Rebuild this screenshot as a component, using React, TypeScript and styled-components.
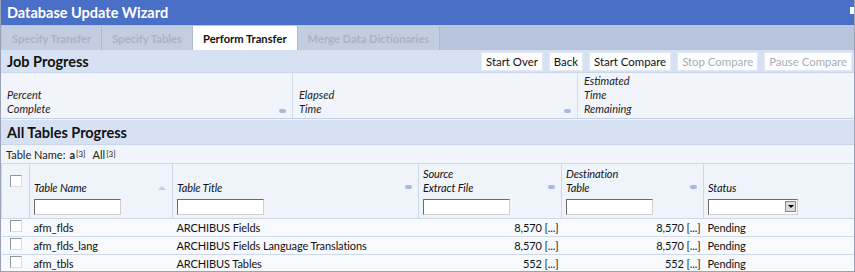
import styled, { createGlobalStyle } from "styled-components";

const GlobalStyle = createGlobalStyle`
  body {
    margin: 0;
    background: #ffffff;
    font-family: Lato, "Liberation Sans", sans-serif;
  }
`;

const Window = styled.div`
  width: 855px;
  height: 272px;
  box-sizing: border-box;
  border: 1px solid #9aa3b5;
  border-top: none;
  background: #f1f5fb;
  overflow: hidden;
`;

const TitleBar = styled.div`
  height: 25px;
  background: #4a6fc7;
  color: #ffffff;
  font-weight: 700;
  font-size: 14.5px;
  padding-left: 6px;
  display: flex;
  align-items: center;
  justify-content: space-between;
`;

const CloseBox = styled.span`
  width: 4px;
  height: 7px;
  background: #ffffff;
  align-self: flex-start;
  margin-top: 7px;
`;

const TabStrip = styled.div`
  height: 25px;
  background: #b8c4dc;
  display: flex;
  align-items: stretch;
  padding-left: 1px;
`;

const Tab = styled.div<{ $active?: boolean }>`
  display: flex;
  align-items: center;
  padding: 0 10px;
  font-size: 11.2px;
  font-weight: 700;
  color: ${(p) => (p.$active ? "#111" : "#a9b3c7")};
  background: ${(p) => (p.$active ? "#ffffff" : "#c3cde1")};
  border-right: 1px solid #aeb9cf;
  margin-top: 1px;
`;

const SectionHeader = styled.div`
  height: 22px;
  background: #d6e2f4;
  display: flex;
  align-items: center;
  justify-content: space-between;
  padding: 0 2px 0 6px;
  border-bottom: 1px solid #c9d5ea;
`;

const SectionTitle = styled.div`
  font-size: 14.5px;
  font-weight: 700;
  color: #111;
`;

const ButtonRow = styled.div`
  display: flex;
  gap: 6px;
`;

const Button = styled.button<{ $disabled?: boolean }>`
  height: 19px;
  padding: 0 4px;
  font-family: inherit;
  font-size: 11.4px;
  color: ${(p) => (p.$disabled ? "#a8adb6" : "#111")};
  background: #fcfdff;
  border: 1px solid #e3e8f1;
  border-radius: 0;
`;

const ProgressGrid = styled.div`
  display: grid;
  grid-template-columns: 292px 285px 1fr;
  height: 45px;
  border-bottom: 1px solid #c5d1e6;
`;

const HeadCell = styled.div<{ $last?: boolean }>`
  position: relative;
  display: flex;
  align-items: flex-end;
  padding: 0 0 2px 6px;
  font-size: 11px;
  font-style: italic;
  line-height: 14px;
  color: #222;
  border-right: ${(p) => (p.$last ? "none" : "1px solid #d3dcec")};
`;

const SortMark = styled.span`
  position: absolute;
  right: 6px;
  bottom: 5px;
  width: 7px;
  height: 4px;
  border-radius: 3px;
  background: #a7bbdf;
`;

const SortArrow = styled.span`
  position: absolute;
  right: 6px;
  bottom: 28px;
  width: 0;
  height: 0;
  border-left: 4px solid transparent;
  border-right: 4px solid transparent;
  border-bottom: 4px solid #c0cde4;
`;

const TablesHeader = styled(SectionHeader)`
  height: 24px;
  margin-top: 1px;
`;

const FilterLine = styled.div`
  height: 18px;
  font-size: 11px;
  color: #222;
  padding-left: 5px;
  display: flex;
  align-items: center;
  sup {
    font-size: 8px;
    vertical-align: 4px;
    margin-left: 1px;
  }
`;

const Bold = styled.b`
  margin-left: 4px;
`;

const AllLink = styled.span`
  margin-left: 7px;
`;

const Table = styled.table`
  border-collapse: collapse;
  width: 853px;
  table-layout: fixed;
  font-size: 11px;
  letter-spacing: -0.1px;
  color: #111;
  th,
  td {
    box-sizing: border-box;
  }
`;

const Th = styled.th`
  height: 55px;
  position: relative;
  vertical-align: bottom;
  text-align: left;
  font-weight: 400;
  font-style: italic;
  padding: 0 0 3px 4px;
  border: 1px solid #cdd8ea;
  line-height: 14px;
  background: #eff4fb;
`;

const CheckTh = styled.th`
  border: 1px solid #cdd8ea;
  vertical-align: top;
  padding-top: 11px;
  background: #eff4fb;
`;

const Box = styled.span`
  display: inline-block;
  width: 10px;
  height: 10px;
  border: 1px solid #8e96a3;
  border-right-color: #d8dde5;
  border-bottom-color: #d8dde5;
  background: #ffffff;
`;

const FilterInput = styled.div<{ $w: number }>`
  width: ${(p) => p.$w}px;
  height: 14px;
  margin-top: 4px;
  border: 1px solid #6b6b6b;
  border-right-color: #d0d0d0;
  border-bottom-color: #d0d0d0;
  background: #ffffff;
  position: relative;
`;

const DropArrow = styled.span`
  position: absolute;
  right: 1px;
  top: 1px;
  width: 11px;
  height: 11px;
  background: #dcdcdc;
  border: 1px solid #888;
  box-sizing: border-box;
  &::after {
    content: "";
    position: absolute;
    left: 2px;
    top: 3px;
    border-left: 3px solid transparent;
    border-right: 3px solid transparent;
    border-top: 3px solid #000;
  }
`;

const Td = styled.td<{ $right?: boolean }>`
  height: 18px;
  padding: 0 3px 0 4px;
  text-align: ${(p) => (p.$right ? "right" : "left")};
  border-top: 1px solid #cdd8ea;
  border-bottom: 1px solid #cdd8ea;
  background: #f7f9fd;
  white-space: nowrap;
  overflow: hidden;
`;

const CheckTd = styled(Td)`
  text-align: center;
  vertical-align: top;
  padding: 1px 0 0 0;
`;

const rows = [
  { name: "afm_flds", title: "ARCHIBUS Fields", src: "8,570", dst: "8,570" },
  {
    name: "afm_flds_lang",
    title: "ARCHIBUS Fields Language Translations",
    src: "8,570",
    dst: "8,570",
  },
  { name: "afm_tbls", title: "ARCHIBUS Tables", src: "552", dst: "552" },
];

const widths = [28, 143, 246, 143, 142, 151];

export default function App() {
  return (
    <>
      <GlobalStyle />
      <Window>
        <TitleBar>
          Database Update Wizard
          <CloseBox />
        </TitleBar>
        <TabStrip>
          <Tab>Specify Transfer</Tab>
          <Tab>Specify Tables</Tab>
          <Tab $active>Perform Transfer</Tab>
          <Tab>Merge Data Dictionaries</Tab>
        </TabStrip>
        <SectionHeader>
          <SectionTitle>Job Progress</SectionTitle>
          <ButtonRow>
            <Button>Start Over</Button>
            <Button>Back</Button>
            <Button>Start Compare</Button>
            <Button $disabled>Stop Compare</Button>
            <Button $disabled>Pause Compare</Button>
          </ButtonRow>
        </SectionHeader>
        <ProgressGrid>
          <HeadCell>
            Percent
            <br />
            Complete
            <SortMark />
          </HeadCell>
          <HeadCell>
            Elapsed
            <br />
            Time
            <SortMark />
          </HeadCell>
          <HeadCell $last>
            Estimated
            <br />
            Time
            <br />
            Remaining
          </HeadCell>
        </ProgressGrid>
        <TablesHeader>
          <SectionTitle>All Tables Progress</SectionTitle>
        </TablesHeader>
        <FilterLine>
          Table Name:
          <Bold>a</Bold>
          <sup>[3]</sup>
          <AllLink>All</AllLink>
          <sup>[3]</sup>
        </FilterLine>
        <Table>
          <colgroup>
            {widths.map((w, i) => (
              <col key={i} style={{ width: w }} />
            ))}
          </colgroup>
          <thead>
            <tr>
              <CheckTh>
                <Box />
              </CheckTh>
              <Th>
                Table Name
                <FilterInput $w={85} />
                <SortArrow />
              </Th>
              <Th>
                Table Title
                <FilterInput $w={85} />
                <SortMark style={{ bottom: 29 }} />
              </Th>
              <Th>
                Source
                <br />
                Extract File
                <FilterInput $w={85} />
                <SortMark style={{ bottom: 29 }} />
              </Th>
              <Th>
                Destination
                <br />
                Table
                <FilterInput $w={85} />
                <SortMark style={{ bottom: 29 }} />
              </Th>
              <Th>
                Status
                <FilterInput $w={88}>
                  <DropArrow />
                </FilterInput>
              </Th>
            </tr>
          </thead>
          <tbody>
            {rows.map((r) => (
              <tr key={r.name}>
                <CheckTd>
                  <Box />
                </CheckTd>
                <Td>{r.name}</Td>
                <Td>{r.title}</Td>
                <Td $right>{r.src} [...]</Td>
                <Td $right>{r.dst} [...]</Td>
                <Td>Pending</Td>
              </tr>
            ))}
          </tbody>
        </Table>
      </Window>
    </>
  );
}
